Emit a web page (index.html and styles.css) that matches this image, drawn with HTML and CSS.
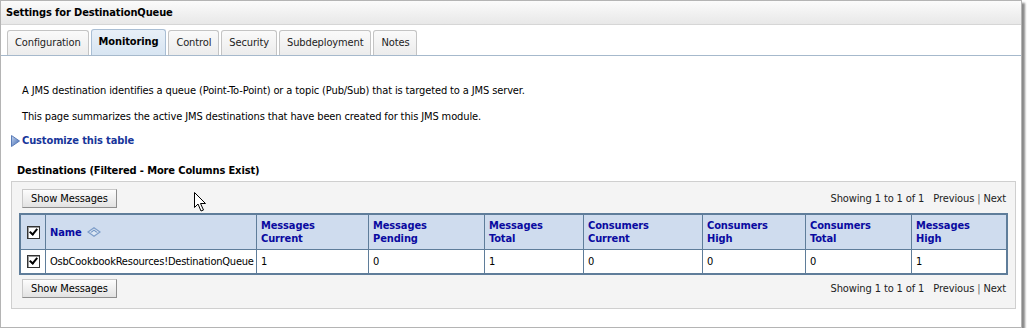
FILE: index.html
```html
<!DOCTYPE html>
<html lang="en">
<head>
    <meta charset="UTF-8">
    <title>Settings for DestinationQueue</title>
    <link rel="stylesheet" href="styles.css">
</head>
<body>

<div id="settings-frame">
    <div class="frame-title">Settings for DestinationQueue</div>

    <div class="tab-row">
        <span class="tab">Configuration</span>
        <span class="tab active">Monitoring</span>
        <span class="tab">Control</span>
        <span class="tab">Security</span>
        <span class="tab">Subdeployment</span>
        <span class="tab">Notes</span>
    </div>

    <div class="intro">
        <p>A JMS destination identifies a queue (Point-To-Point) or a topic (Pub/Sub) that is targeted to a JMS server.</p>
        <p>This page summarizes the active JMS destinations that have been created for this JMS module.</p>
    </div>

    <a class="customize" href="#">
        <svg width="9" height="12" viewBox="0 0 9 12">
            <defs>
                <linearGradient id="tri" x1="0" y1="0" x2="1" y2="1">
                    <stop offset="0" stop-color="#c8d8f0"/>
                    <stop offset="1" stop-color="#3a64b0"/>
                </linearGradient>
            </defs>
            <path d="M0.5 0.5 L8.5 6 L0.5 11.5 Z" fill="url(#tri)" stroke="#5a7cb8" stroke-width="1"/>
        </svg>
        Customize this table
    </a>

    <h3 class="table-title">Destinations (Filtered - More Columns Exist)</h3>

    <div class="table-panel">
        <div class="table-bar">
            <button class="btn">Show Messages</button>
            <span class="pager">Showing 1 to 1 of 1&nbsp;&nbsp; Previous <span class="sep">|</span> Next</span>
        </div>

        <table class="dest-table">
            <thead>
                <tr>
                    <th class="col-check"><span class="check"></span></th>
                    <th class="col-name">Name
                        <svg class="sort" width="14" height="10" viewBox="0 0 14 10">
                            <path d="M1 5 L7 0.8 L13 5 L7 9.2 Z" fill="#dce7f4" stroke="#7d9dc9" stroke-width="1.3"/>
                            <path d="M3 5.4 L7 2.4 L11 5.4 L9.2 5.4 L7 3.8 L4.8 5.4 Z" fill="#6f92c2"/>
                        </svg>
                    </th>
                    <th class="c1">Messages<br>Current</th>
                    <th class="c2">Messages<br>Pending</th>
                    <th class="c3">Messages<br>Total</th>
                    <th class="c4">Consumers<br>Current</th>
                    <th class="c5">Consumers<br>High</th>
                    <th class="c6">Consumers<br>Total</th>
                    <th class="c7">Messages<br>High</th>
                </tr>
            </thead>
            <tbody>
                <tr>
                    <td class="col-check"><span class="check"></span></td>
                    <td class="name-cell">OsbCookbookResources!DestinationQueue</td>
                    <td>1</td>
                    <td>0</td>
                    <td>1</td>
                    <td>0</td>
                    <td>0</td>
                    <td>0</td>
                    <td>1</td>
                </tr>
            </tbody>
        </table>

        <div class="table-bar">
            <button class="btn">Show Messages</button>
            <span class="pager">Showing 1 to 1 of 1&nbsp;&nbsp; Previous <span class="sep">|</span> Next</span>
        </div>
    </div>

    <!-- mouse pointer in the screenshot -->
    <svg class="pointer" width="14" height="21" viewBox="0 0 14 21">
        <path d="M0.5 0.5 L0.5 15.5 L4 12 L7 19 L9.5 18 L6.5 11.5 L11.5 11.5 Z" fill="#fff" stroke="#000" stroke-width="1"/>
    </svg>
</div>

</body>
</html>
```

FILE: styles.css
```css
/* WebLogic console look */
body {
    margin: 0;
    padding: 0;
    background-color: #fff;
    font-family: "DejaVu Sans Condensed", "DejaVu Sans", sans-serif;
    font-size: 11px;
    letter-spacing: -0.12px;
    color: #000;
}

#settings-frame {
    position: relative;
    width: 1020px;
    height: 326px;
    border: 1px solid #b4b4b4;
    box-shadow: 3px 3px 2px #8a8a8a;
    background-color: #fff;
}

.frame-title {
    height: 23px;
    line-height: 23px;
    padding-left: 5px;
    font-weight: bold;
    background: linear-gradient(#fbfbfb, #e8e8e8);
    border-bottom: 1px solid #d6d6d6;
}

/* Tabs */
.tab-row {
    display: flex;
    align-items: flex-end;
    margin-top: 4px;
    padding-left: 6px;
    border-bottom: 1px solid #a6b9cc;
    height: 26px;
}

.tab {
    height: 24px;
    line-height: 24px;
    padding: 0 7px;
    margin-right: 2px;
    border: 1px solid #c4c4c4;
    border-bottom: none;
    border-radius: 3px 3px 0 0;
    background: linear-gradient(#fafafa, #ececec);
    color: #222;
}

.tab.active {
    height: 25px;
    font-weight: bold;
    color: #000;
    border-color: #a9bed4;
    background: linear-gradient(#e8f0f8, #d8e5f2);
}

/* Intro text */
.intro {
    padding: 0 0 0 21px;
    margin-top: 28px;
}

.intro p {
    margin: 0 0 12px 0;
    line-height: 14px;
}

.intro p:last-child {
    margin-bottom: 9px;
}

.customize {
    display: flex;
    align-items: center;
    gap: 2px;
    margin: 0 0 0 10px;
    color: #17359a;
    font-weight: bold;
    font-size: 11px;
    text-decoration: none;
    line-height: 15px;
}

.table-title {
    margin: 15px 0 0 16px;
    font-size: 11px;
    font-weight: bold;
    line-height: 15px;
}

/* Table panel */
.table-panel {
    margin: 3px 5px 0 10px;
    padding: 4px 7px 8px 7px;
    background-color: #f4f4f4;
    border: 1px solid #cfcfcf;
}

.table-bar {
    display: flex;
    justify-content: space-between;
    align-items: center;
    height: 24px;
    padding-left: 3px;
}

.btn {
    font-family: inherit;
    font-size: 11px;
    letter-spacing: -0.12px;
    height: 19px;
    padding: 0 8px;
    border: 1px solid #8e8e8e;
    border-top-color: #c8c8c8;
    border-left-color: #c8c8c8;
    background: linear-gradient(#fdfdfd, #e2e2e2);
    color: #000;
}

.pager {
    color: #222;
    padding-right: 2px;
}

.pager .sep {
    color: #666;
}

.dest-table {
    width: 989px;
    border-collapse: collapse;
    border: 2px solid #5f7d9a;
    margin: 3px 0 1px 0;
}

.dest-table th,
.dest-table td {
    border: 1px solid #5f7d9a;
    text-align: left;
    vertical-align: middle;
    padding: 2px 4px;
}

.dest-table th {
    background-color: #cfdcee;
    color: #0a0aa0;
    font-weight: bold;
    height: 30px;
    line-height: 13px;
}

.dest-table td {
    background-color: #fff;
    height: 19px;
}

.dest-table td.name-cell {
    letter-spacing: -0.22px;
    padding-right: 2px;
}

.col-check {
    width: 16px;
    text-align: center !important;
}

.col-name { width: 202px; }
.c1 { width: 103px; }
.c2 { width: 107px; }
.c3 { width: 90px; }
.c4 { width: 110px; }
.c5 { width: 94px; }
.c6 { width: 97px; }

.sort {
    vertical-align: -1px;
    margin-left: 2px;
}

.check {
    display: inline-block;
    width: 11px;
    height: 11px;
    border: 1px solid #333;
    background-color: #fff;
    box-shadow: inset 1px 1px 0 #9a9a9a;
    position: relative;
    vertical-align: middle;
}

.check::after {
    content: "";
    position: absolute;
    left: 3px;
    top: 0px;
    width: 3px;
    height: 6px;
    border: solid #000;
    border-width: 0 2px 2px 0;
    transform: rotate(40deg);
}

.pointer {
    position: absolute;
    left: 193px;
    top: 191px;
}
```
